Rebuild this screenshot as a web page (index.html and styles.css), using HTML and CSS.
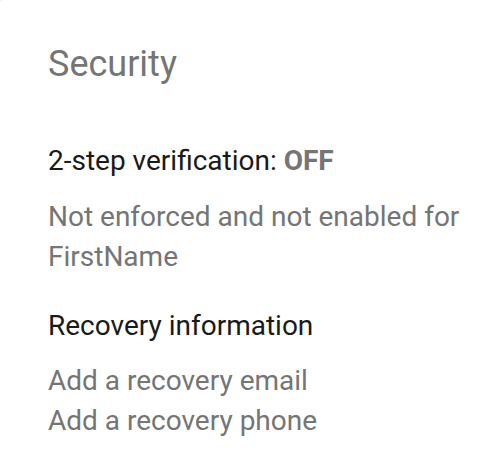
FILE: index.html
```html
<!DOCTYPE html>
<html lang="en">
<head>
<meta charset="utf-8">
<title>Security</title>
<link rel="stylesheet" href="styles.css">
</head>
<body>
<div class="card">
  <h2 class="title">Security</h2>
  <div class="section">
    <div class="label">2-step verification: <span class="status">OFF</span></div>
    <div class="desc">Not enforced and not enabled for FirstName</div>
  </div>
  <div class="section recovery">
    <div class="label">Recovery information</div>
    <div class="links">
      <span class="link">Add a recovery email</span>
      <span class="link">Add a recovery phone</span>
    </div>
  </div>
</div>
</body>
</html>
```

FILE: styles.css
```css
html, body {
  margin: 0;
  padding: 0;
  background: #ececec;
}
body {
  font-family: Roboto, "Liberation Sans", sans-serif;
}
.card {
  background: #fff;
  min-height: 464px;
  box-sizing: border-box;
  border-top-left-radius: 3px;
  padding: 42px 12px 0 48px;
  display: flex;
  flex-direction: column;
}
.title {
  margin: 0;
  font-size: 36px;
  line-height: 44px;
  font-weight: 400;
  color: #757575;
}
.section {
  display: flex;
  flex-direction: column;
}
.section:first-of-type {
  margin-top: 55px;
}
.label {
  font-size: 28px;
  line-height: 40px;
  color: #1a1a1a;
}
.status {
  font-weight: 700;
  color: #757575;
}
.desc {
  margin-top: 16px;
  font-size: 28px;
  line-height: 40px;
  color: #757575;
}
.recovery {
  margin-top: 29px;
}
.links {
  margin-top: 15px;
  display: flex;
  flex-direction: column;
}
.link {
  font-size: 28px;
  line-height: 40px;
  color: #757575;
}
```
